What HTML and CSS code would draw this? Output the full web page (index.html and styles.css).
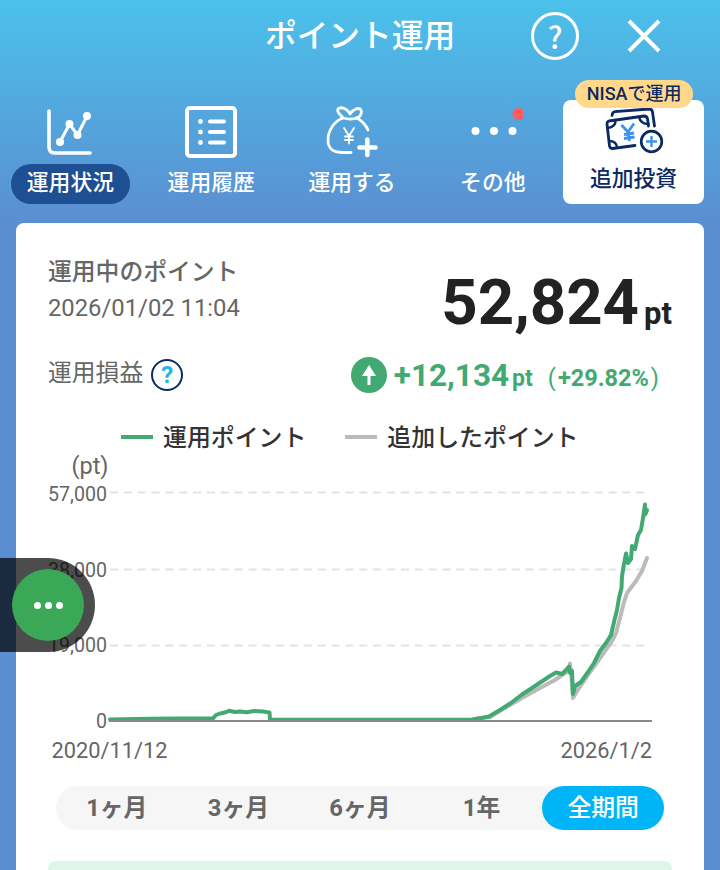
FILE: index.html
```html
<!DOCTYPE html>
<html lang="ja">
<head>
  <meta charset="UTF-8" />
  <meta name="viewport" content="width=device-width, initial-scale=1.0"/>
  <title>ポイント運用</title>
  <link rel="stylesheet" href="styles.css">
</head>
<body>

  <!-- Header -->
  <header class="header">
    <h1>ポイント運用</h1>
    <div class="header-actions">
      <button class="icon-btn help-btn">?</button>
      <button class="icon-btn">
        <svg width="34" height="34" viewBox="0 0 34 34" fill="none" stroke="#fff" stroke-width="4">
          <path d="M2 2 L32 32 M32 2 L2 32"/>
        </svg>
      </button>
    </div>
  </header>

  <!-- Tabs -->
  <nav class="tabs">
    <a class="tab active">
      <svg class="tab-icon" width="60" height="60" viewBox="0 0 60 60" fill="none" stroke="#fff" stroke-width="3.6" stroke-linecap="round" stroke-linejoin="round">
        <path d="M9 11 V47 Q9 53 15 53 H50"/>
        <path d="M20 42 L29.500 24 L37.500 35 L47 16" stroke-width="3"/>
        <g fill="#fff" stroke="none">
          <circle cx="20" cy="42" r="4"/><circle cx="29.500" cy="24" r="4"/>
          <circle cx="37.500" cy="35" r="4"/><circle cx="47" cy="16" r="4"/>
        </g>
      </svg>
      <span class="tab-label">運用状況</span>
    </a>
    <a class="tab">
      <svg class="tab-icon" width="60" height="60" viewBox="0 0 60 60" fill="none" stroke="#fff" stroke-width="4" stroke-linecap="round">
        <rect x="6" y="8" width="48" height="48" rx="3"/>
        <path d="M29 21.500 H43 M29 32 H43 M29 42.500 H43"/>
        <g fill="#fff" stroke="none">
          <circle cx="19.500" cy="21.500" r="2.400"/><circle cx="19.500" cy="32" r="2.400"/><circle cx="19.500" cy="42.500" r="2.400"/>
        </g>
      </svg>
      <span class="tab-label">運用履歴</span>
    </a>
    <a class="tab">
      <svg class="tab-icon" width="60" height="60" viewBox="1 0 60 60" fill="none" stroke="#fff" stroke-width="2.800" stroke-linecap="round" stroke-linejoin="round">
        <path d="M22 18 C13 21 7 31 7 40 C7 50 13 52.500 22 52.500 H30"/>
        <path d="M22 18 C20 15 15 12 17 9 C20 6 27 9 29 14 C32 9 38 7 40 10 C41 13 40 15 38 17 C33 19.500 27 19.500 22 18 Z"/>
        <path d="M36 18 C41 21 45 25 47 30"/>
        <path d="M23 28 L28 36 L33 28 M28 36 V43.500 M24 36.500 H32 M24 40 H32" stroke-width="1.800"/>
        <path d="M46.300 39.500 V55 M38.500 47.500 H54.500" stroke-width="4.600"/>
      </svg>
      <span class="tab-label">運用する</span>
    </a>
    <a class="tab">
      <svg class="tab-icon" width="60" height="60" viewBox="0 0 60 60" fill="#fff">
        <circle cx="12.500" cy="31" r="4"/><circle cx="31" cy="31" r="4"/><circle cx="49.500" cy="31" r="4"/>
        <circle cx="55.500" cy="14" r="6" fill="#ff5a5c"/>
      </svg>
      <span class="tab-label">その他</span>
    </a>
    <a class="tab invest">
      <span class="badge">NISAで運用</span>
      <svg class="tab-icon" width="60" height="56" viewBox="0 0 60 56" fill="none" stroke="#0b2a63" stroke-width="2.800" stroke-linecap="round" stroke-linejoin="round">
        <path d="M8 15.500 L8.500 13.500 Q9 12 11 11.700 L45 9 Q48 9 48.500 12 L50.500 26"/>
        <path d="M31 45.500 L8.500 48.500 Q6 48.500 5.500 46 L3 24 Q3 21.500 5 21 L40 16 Q43 16 43.500 19 L44.500 26"/>
        <path d="M11.500 20 Q12 27 3.500 28 M35 17 Q36.500 24 44.500 24 M5 41 Q12.500 41 13 47.500" stroke-width="2.400"/>
        <g stroke="#3c92ef" stroke-width="2.800" stroke-linecap="butt">
          <path d="M17.500 25 L24 32 L30 23.500 M24 32 L25.500 41 M20 34.500 L30 33 M20 38.500 L30.500 37"/>
          <path d="M47.500 36 V47 M42 41.500 H53" stroke-width="2.400"/>
        </g>
        <circle cx="47.500" cy="41.500" r="10.300" stroke-width="2.700"/>
      </svg>
      <span class="tab-label">追加投資</span>
    </a>
  </nav>

  <!-- Main card -->
  <main class="card">
    <div class="balance">
      <div class="balance-info">
        <p class="balance-title">運用中のポイント</p>
        <p class="date">2026/01/02 11:04</p>
      </div>
      <p class="amount">52,824<span>pt</span></p>
    </div>

    <div class="profit">
      <div class="profit-title"><span>運用損益</span><span class="help">?</span></div>
      <div class="profit-value">
        <svg width="36" height="36" viewBox="0 0 36 36">
          <circle cx="18" cy="18" r="18" fill="#43a972"/>
          <path d="M18 8 L25 19 H19.500 V28 H16.500 V19 H11 Z" fill="#fff"/>
        </svg>
        <span class="gain">+12,134</span><span class="gain-unit">pt</span><span class="rate"><i>(</i>+29.82%<i>)</i></span>
      </div>
    </div>

    <div class="legend">
      <span class="legend-item"><b class="line green"></b>運用ポイント</span>
      <span class="legend-item"><b class="line gray"></b>追加したポイント</span>
    </div>

    <!-- Chart -->
    <svg class="chart" width="624" height="310" viewBox="48 455 624 310">
      <g class="axis">
        <text class="unit" x="108.500" y="474">(pt)</text>
        <text x="107" y="501">57,000</text>
        <text x="107" y="577">38,000</text>
        <text x="107" y="652">19,000</text>
        <text x="107" y="727.500">0</text>
      </g>
      <path class="grid" d="M110 492.500 H648 M110 569.500 H648 M110 645.500 H648"/>
      <path class="series gray" d="M474 719 L490 717 L510 705 L522 698 L540 688 L555 680 L562 675 L569 671 L570 663.500 L571 672 L573 698 L579 688 L588 675 L598 661 L612 641 L616 633 L620 618 L624 602 L627 593 L636 581 L642 571 L647 558"/>
      <path class="series green" d="M110 719.500 L150 718.700 L213 718.300 L216 715 L220 713.500 L225 712.500 L229 710.700 L235 712 L240 711.500 L247 712.300 L254 711 L263 711.500 L269.500 712.500 L270 719.700 L472 719.700 L489 716.500 L500 710 L511 703 L522 694.500 L532 688 L541 682 L550 676 L556 672.500 L562 674 L566 670 L569 666.500 L570 673 L572 671 L573 694 L575 686 L581 682 L588 672 L594 663 L600 651 L606 643 L611 635 L614 622 L617 610 L619 598 L621.500 588 L622 576 L624 564 L626 553.500 L628 563 L631 559 L632 546 L635 549 L638 535 L641 530 L643 518 L645 504.500 L645.500 514 L647 510 L643 517"/>
      <path class="base" d="M109 721 H652"/>
      <g class="dates">
        <text x="51.500" y="758">2020/11/12</text>
        <text class="end" x="652" y="758">2026/1/2</text>
      </g>
    </svg>

    <div class="periods">
      <button>1ヶ月</button>
      <button>3ヶ月</button>
      <button>6ヶ月</button>
      <button>1年</button>
      <button class="selected">全期間</button>
    </div>

    <div class="notice"></div>
  </main>

  <!-- Floating button -->
  <div class="floating">
    <button><i></i><i></i><i></i></button>
  </div>

</body>
</html>
```
FILE: styles.css
```css
* {
  box-sizing: border-box;
}
body {
  margin: 0;
  height: 870px;
  overflow: hidden;
  font-family: Roboto, 'Noto Sans CJK JP', sans-serif;
  background: linear-gradient(#4bc1ea 0, #5b8ed1 222px);
  color: #666;
}
p, h1 {
  margin: 0;
}
button {
  padding: 0;
  border: none;
  background: none;
  font-family: inherit;
  color: inherit;
}
.header {
  display: grid;
  grid-template-columns: 1fr auto 1fr;
  height: 100px;
  color: #fff;
}
.header h1 {
  grid-column: 2;
  font-size: 31.7px;
  font-weight: 500;
  line-height: 74px;
}
.header-actions {
  display: flex;
  align-items: center;
  gap: 48px;
  height: 72px;
  padding-left: 76px;
}
.icon-btn {
  display: flex;
  align-items: center;
  justify-content: center;
}
.help-btn {
  width: 48px;
  height: 48px;
  border: 3px solid #fff;
  border-radius: 50%;
  font-family: 'Noto Sans CJK JP', sans-serif;
  font-size: 30px;
  font-weight: 500;
  line-height: 40px;
}

/* Tabs */
.tabs {
  display: flex;
  height: 104px;
  padding-right: 16px;
}
.tab {
  flex: 1;
  display: flex;
  flex-direction: column;
  align-items: center;
  color: #fff;
}
.tab-icon {
  height: 60px;
  margin-bottom: 4px;
}
.tab-label {
  width: 119px;
  height: 40px;
  border-radius: 20px;
  font-size: 21.8px;
  font-weight: 500;
  line-height: 38px;
  text-align: center;
}
.active .tab-label {
  background: #1e4f92;
}
.invest {
  position: relative;
  border-radius: 8px;
  background: #fff;
  color: #0b2a63;
}
.invest .tab-icon {
  height: 56px;
}
.badge {
  position: absolute;
  top: -20px;
  left: 12px;
  width: 118px;
  height: 28px;
  border-radius: 14px;
  background: #ffd88c;
  font-size: 18px;
  font-weight: 500;
  line-height: 27px;
  text-align: center;
}

/* Card */
.card {
  height: 660px;
  margin: 19px 16px 0;
  padding: 29px 32px 0;
  border-radius: 8px;
  background: #fff;
}
.balance {
  display: flex;
  justify-content: space-between;
  height: 99px;
}
.balance-title {
  font-size: 23.8px;
  font-weight: 500;
  line-height: 40px;
}
.date {
  font-size: 23.8px;
  line-height: 32px;
}
.amount {
  font-size: 63.5px;
  font-weight: 700;
  line-height: 102px;
  color: #222;
}
.amount span {
  margin-left: 5px;
  font-size: 31px;
}
.profit {
  display: flex;
  justify-content: space-between;
  align-items: center;
  height: 48px;
}
.profit-title {
  display: flex;
  align-items: center;
  font-size: 23.8px;
  line-height: 28px;
}
.profit-title span:first-child {
  margin-top: -4px;
}
.help {
  width: 32px;
  height: 32px;
  margin-left: 8px;
  border: 2.5px solid #0b2a63;
  border-radius: 50%;
  font-size: 24px;
  font-weight: 700;
  line-height: 28px;
  text-align: center;
  color: #1eb4ee;
}
.profit-value {
  display: flex;
  align-items: baseline;
  margin-right: 11px;
  font-weight: 700;
  color: #43a972;
}
.profit-value svg {
  align-self: center;
  margin-right: 7px;
}
.gain {
  font-size: 31.5px;
}
.gain-unit {
  margin-left: 3px;
  font-size: 23px;
}
.rate {
  margin-left: 13px;
  font-size: 23.5px;
}
.rate i {
  margin: 0 2px;
  font-style: normal;
  font-weight: 400;
}
.legend {
  display: flex;
  gap: 39px;
  height: 56px;
  padding-left: 73px;
}
.legend-item {
  display: flex;
  align-items: center;
  height: 72px;
  font-size: 23.9px;
  font-weight: 500;
  color: #333;
}
.line {
  width: 32px;
  height: 4px;
  margin: 3px 10px 0 0;
}
.line.green {
  background: #43a972;
}
.line.gray {
  background: #bbb;
}

/* Chart */
.chart {
  display: block;
}
.chart text {
  fill: #666;
}
.axis text {
  font-size: 19.6px;
  text-anchor: end;
}
.axis .unit {
  font-size: 23.5px;
}
.dates text {
  font-size: 21.8px;
}
.dates .end {
  text-anchor: end;
}
.grid {
  stroke: #e3e3e3;
  stroke-width: 2;
  stroke-dasharray: 8 5.85;
}
.base {
  stroke: #888;
  stroke-width: 2;
}
.series {
  fill: none;
  stroke-width: 4;
  stroke-linecap: round;
  stroke-linejoin: round;
}
.series.gray {
  stroke: #bbb;
}
.series.green {
  stroke: #43a972;
}

.periods {
  display: flex;
  height: 44px;
  margin: 21px 8px 31px;
  border-radius: 22px;
  background: #f6f6f6;
}
.periods button {
  flex: 1;
  border-radius: 22px;
  font-size: 23.8px;
  font-weight: 700;
  line-height: 42px;
}
.periods .selected {
  background: #00b5f7;
  color: #fff;
  font-weight: 500;
}
.notice {
  height: 40px;
  border-radius: 8px;
  background: #dff5ea;
}

.floating {
  position: absolute;
  top: 558px;
  left: 0;
  width: 95px;
  height: 94px;
  padding: 11px 12px;
  border-radius: 0 47px 47px 0;
  background: rgba(0, 0, 0, 0.7);
}
.floating button {
  display: flex;
  align-items: center;
  justify-content: center;
  gap: 4px;
  width: 72px;
  height: 72px;
  border-radius: 50%;
  background: #3aa857;
}
.floating i {
  width: 7px;
  height: 7px;
  border-radius: 50%;
  background: #fff;
}
```
